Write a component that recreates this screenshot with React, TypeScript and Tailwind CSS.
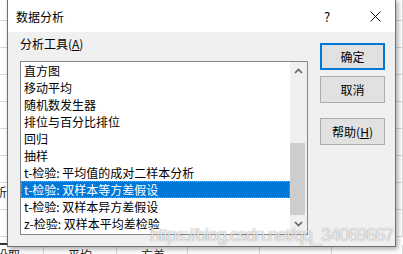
import React from 'react';

const tools = [
  '直方图',
  '移动平均',
  '随机数发生器',
  '排位与百分比排位',
  '回归',
  '抽样',
  't-检验: 平均值的成对二样本分析',
  't-检验: 双样本等方差假设',
  't-检验: 双样本异方差假设',
  'z-检验: 双样本平均差检验',
];

const SELECTED = 7;

const colClass = 'border-r border-[#d9d9d9] h-full overflow-visible whitespace-nowrap';

function SheetRow({ h, children }: { h: string; children?: React.ReactNode[] }) {
  const cells = children ?? [];
  return (
    <div className={`grid grid-cols-[44px_73px_71px_72px_72px_71px] border-b border-[#d9d9d9] ${h}`}>
      {[0, 1, 2, 3, 4, 5].map(i => (
        <div key={i} className={colClass}>
          {cells[i]}
        </div>
      ))}
    </div>
  );
}

function Chevron({ up }: { up?: boolean }) {
  return (
    <svg width="9" height="6" viewBox="0 0 9 6">
      <path
        d={up ? 'M1 5 L4.5 1.5 L8 5' : 'M1 1 L4.5 4.5 L8 1'}
        fill="none"
        stroke="#606060"
        strokeWidth="1.6"
      />
    </svg>
  );
}

export default function App() {
  return (
    <div className="relative w-[403px] h-[254px] overflow-hidden bg-white font-['Noto_Sans_CJK_SC',sans-serif] text-black">
      {/* Excel sheet behind the dialog */}
      <div className="flex flex-col">
        <SheetRow h="h-[21px]" />
        <SheetRow h="h-[27px]" />
        <SheetRow h="h-[27px]" />
        <SheetRow h="h-[27px]" />
        <SheetRow h="h-[27px]" />
        <SheetRow h="h-[27px]" />
        <SheetRow h="h-[27px]" />
        <SheetRow h="h-[27px]">
          {[
            <div key="a" className="-ml-[5px] pt-[1px] text-[12px] leading-[16px] text-[#222]">析</div>,
          ]}
        </SheetRow>
        <SheetRow h="h-[27px]" />
        <div className="h-[8px] border-b-2 border-[#333] w-[188px]" />
        <div className="grid grid-cols-[44px_73px_71px_72px_72px_71px] h-[20px] text-[12px] leading-[16px] text-[#222]">
          <div className={`${colClass} -ml-[4px] pt-[2px]`}>设取</div>
          <div className={`${colClass} text-center pt-[2px]`}>平均</div>
          <div className={`${colClass} pl-[24px] pt-[2px]`}>方差</div>
          <div className={colClass} />
          <div className={colClass} />
          <div className={colClass} />
        </div>
      </div>

      {/* Dialog window */}
      <div className="absolute left-[7px] top-[-1px] w-[389px] h-[248px] border border-[#707070] bg-[#f0f0f0] shadow-[2px_2px_5px_rgba(0,0,0,0.35)] flex flex-col">
        <div className="h-[32px] bg-white flex items-center pl-[8px] pt-[1px] text-[12px]">
          <span>数据分析</span>
          <span className="ml-auto w-[20px] text-center text-[13px]">?</span>
          <span className="ml-[18px] w-[40px] flex justify-center">
            <svg width="11" height="11" viewBox="0 0 11 11">
              <path d="M0.5 0.5 L10.5 10.5 M10.5 0.5 L0.5 10.5" stroke="#111" strokeWidth="1" />
            </svg>
          </span>
        </div>

        <div className="flex-1 flex">
          <div className="pl-[12px] pt-[4px] flex flex-col">
            <div className="text-[12px] leading-[16px]">
              分析工具(<span className="underline">A</span>)
            </div>
            <div className="mt-[9px] w-[288px] h-[174px] border border-[#828790] bg-white flex">
              <div className="flex-1 flex flex-col">
                {tools.map((t, i) => (
                  <div
                    key={t}
                    className={`h-[17px] pl-[3px] text-[12px] leading-[17px] whitespace-nowrap ${
                      i === SELECTED
                        ? 'bg-[#0078d7] text-white outline-1 outline-dotted outline-[#f08a24] -outline-offset-1'
                        : ''
                    }`}
                  >
                    {t}
                  </div>
                ))}
              </div>
              <div className="w-[17px] bg-[#f0f0f0] flex flex-col">
                <div className="h-[17px] flex items-center justify-center pr-[1px]">
                  <Chevron up />
                </div>
                <div className="h-[64px]" />
                <div className="h-[72px] w-[15px] bg-[#cdcdcd]" />
                <div className="h-[17px] flex items-center justify-center pr-[1px]">
                  <Chevron />
                </div>
              </div>
            </div>
          </div>

          <div className="ml-[12px] pt-[11px] flex flex-col text-[12px]">
            <button className="h-[27px] w-[65px] border-2 border-[#0078d7] bg-[#e1e1e1] leading-[16px]">
              确定
            </button>
            <button className="mt-[6px] h-[27px] w-[65px] border border-[#adadad] bg-[#e1e1e1] leading-[16px]">
              取消
            </button>
            <button className="mt-[15px] h-[27px] w-[65px] border border-[#adadad] bg-[#e1e1e1] leading-[16px]">
              帮助(<span className="underline">H</span>)
            </button>
          </div>
        </div>
      </div>

      {/* watermark */}
      <div className="absolute left-[150px] top-[226px] font-['Liberation_Sans',sans-serif] text-[18px] leading-[18px] tracking-[-1px] text-white/80 [text-shadow:0_0_1px_rgba(0,0,0,0.5)] whitespace-nowrap pointer-events-none">
        https://blog.csdn.net/qq_34069667
      </div>
    </div>
  );
}
